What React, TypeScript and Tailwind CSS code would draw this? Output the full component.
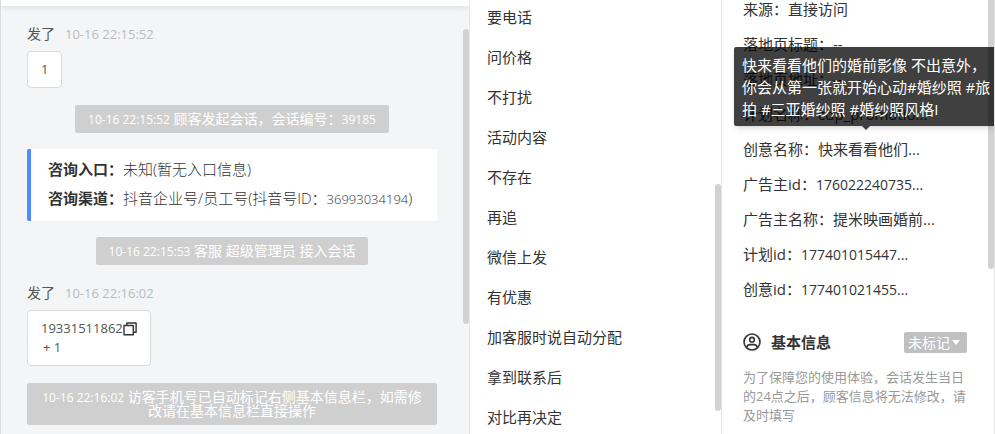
import { ReactNode, useState } from "react";
import clsx from "clsx";

const quickTags = [
  "要电话",
  "问价格",
  "不打扰",
  "活动内容",
  "不存在",
  "再追",
  "微信上发",
  "有优惠",
  "加客服时说自动分配",
  "拿到联系后",
  "对比再决定",
];

const details = [
  { label: "来源", value: "直接访问" },
  { label: "落地页标题", value: "--" },
  { label: "落地页地址", value: "--" },
  { label: "计划名称", value: "cdp_promotio..." },
  {
    label: "创意名称",
    value: "快来看看他们...",
    tooltip: [
      "快来看看他们的婚前影像 不出意外，",
      "你会从第一张就开始心动#婚纱照 #旅",
      "拍 #三亚婚纱照 #婚纱照风格I",
    ],
  },
  { label: "广告主id", value: "176022240735..." },
  { label: "广告主名称", value: "提米映画婚前..." },
  { label: "计划id", value: "177401015447..." },
  { label: "创意id", value: "177401021455..." },
];

const Num = ({ children }: { children: ReactNode }) => (
  <span className="text-xs leading-none">{children}</span>
);

const Scrollbar = ({ className }: { className: string }) => (
  <div className={clsx("absolute w-1.5 bg-[#d2d2d2]", className)} />
);

const Sender = ({ name, time }: { name: string; time: string }) => (
  <div className="mb-[7px] flex h-5 items-center gap-2.5 leading-5">
    <span className="text-[#555]">{name}</span>
    <time className="text-[13px] text-[#bbb]">{time}</time>
  </div>
);

const Bubble = ({ children }: { children: ReactNode }) => (
  <div className="w-fit rounded border border-[#d9dadc] bg-white px-[13px] py-2 text-[13px] leading-[19px] text-[#555]">
    {children}
  </div>
);

const Notice = ({ children }: { children: ReactNode }) => (
  <p className="mx-auto w-fit rounded-xs bg-[#cfcfcf] px-[13px] py-[7px] text-center leading-[14px] text-white">
    {children}
  </p>
);

const CopyIcon = () => (
  <svg
    viewBox="0 0 14 14"
    className="h-3.5 w-3.5"
    fill="none"
    stroke="#333"
    strokeWidth="1.4"
    strokeLinejoin="round"
  >
    <path d="M1 3.5h9.3v9.3H1z" />
    <path d="M3.8 3.5V1h9.3v9.3h-2.8" />
  </svg>
);

const UserIcon = () => (
  <svg
    viewBox="0 0 18 18"
    className="h-[18px] w-[18px]"
    fill="none"
    stroke="#333"
    strokeWidth="1.6"
  >
    <circle cx="9" cy="9" r="8" />
    <circle cx="9" cy="6.7" r="2.3" />
    <path d="M3.7 14.6C4 12.4 5.4 11.6 7 11.6h4c1.6 0 3 .8 3.3 3" />
  </svg>
);

const Chat = () => (
  <section className="relative overflow-hidden border-x border-l-[#d9dadc] border-r-[#e6e7e9] bg-[#f3f5f7] text-sm">
    <header className="h-1.5 bg-white shadow-[0_1px_6px_rgba(0,0,0,0.12)]" />
    <div className="flex flex-col gap-4 pt-4 pr-8 pl-[26px]">
      <div className="pt-0.5 pb-px">
        <Sender name="发了" time="10-16 22:15:52" />
        <Bubble>1</Bubble>
      </div>
      <Notice>
        <Num>10-16 22:15:52</Num> 顾客发起会话，会话编号：<Num>39185</Num>
      </Notice>
      <dl className="rounded-xs border-l-4 border-[#4e8cff] bg-white pt-1.5 pb-2 pl-[17px] text-[15px] leading-[29px] font-light text-[#333]">
        <div className="flex">
          <dt className="font-bold">咨询入口：</dt>
          <dd>未知(暂无入口信息)</dd>
        </div>
        <div className="flex">
          <dt className="font-bold">咨询渠道：</dt>
          <dd>
            抖音企业号/员工号(抖音号ID：
            <span className="text-[13px] leading-none">36993034194</span>)
          </dd>
        </div>
      </dl>
      <Notice>
        <Num>10-16 22:15:53</Num> 客服 超级管理员 接入会话
      </Notice>
      <div className="pt-0.5 pb-px">
        <Sender name="发了" time="10-16 22:16:02" />
        <Bubble>
          <div className="flex items-center">
            19331511862
            <button type="button" aria-label="复制" className="cursor-pointer">
              <CopyIcon />
            </button>
          </div>
          <div className="pl-0.5">+ 1</div>
        </Bubble>
      </div>
      <Notice>
        <Num>10-16 22:16:02</Num>{" "}
        访客手机号已自动标记右侧基本信息栏，如需修改请在基本信息栏直接操作
      </Notice>
    </div>
    <Scrollbar className="top-[29px] right-0 h-[295px] rounded-full" />
  </section>
);

const QuickTags = () => (
  <section className="relative overflow-hidden border-r border-[#e4e4e4]">
    <ul className="-mt-[3px] pl-[17px] text-[15px] text-[#333]">
      {quickTags.map((tag) => (
        <li key={tag} className="flex h-10 items-center">
          {tag}
        </li>
      ))}
    </ul>
    <Scrollbar className="top-[184px] right-0 h-[227px] rounded-full" />
  </section>
);

const Tooltip = ({ lines }: { lines: string[] }) => (
  <div
    role="tooltip"
    className="absolute bottom-full -left-[9px] z-10 mb-1.5 w-[264px] rounded-xs bg-black/75 px-2 pt-[7px] pb-1.5 text-[15px] leading-[22px] whitespace-nowrap text-white shadow-md"
  >
    {lines.map((line) => (
      <div key={line}>{line}</div>
    ))}
    <span className="absolute top-full left-1/2 -translate-x-1 border-x-4 border-t-4 border-x-transparent border-t-black/75" />
  </div>
);

const Visitor = () => {
  const [mark, setMark] = useState("未标记");

  return (
    <section className="relative overflow-hidden border-r border-[#e4e4e4] pr-[27px] pl-[21px]">
      <Scrollbar className="top-0 right-0 h-[269px] rounded-b-full" />
      <dl className="-mt-2 text-[15px] text-[#333]">
        {details.map(({ label, value, tooltip }) => (
          <div key={label} className="relative flex h-[35px] items-center">
            <dt>{label}：</dt>
            <dd className={clsx(/^\d/.test(value) && "text-sm")}>{value}</dd>
            {tooltip ? <Tooltip lines={tooltip} /> : null}
          </div>
        ))}
      </dl>
      <div className="mt-6 flex items-center">
        <UserIcon />
        <h2 className="ml-2.5 text-[15px] font-bold text-[#333]">基本信息</h2>
        <div className="relative ml-auto">
          <select
            aria-label="标记"
            value={mark}
            onChange={(e) => setMark(e.target.value)}
            className="block h-[21px] w-[63px] appearance-none rounded-xs bg-[#c0c0c0] pl-1 text-sm leading-[21px] text-white"
          >
            <option>未标记</option>
            <option>已标记</option>
          </select>
          <span className="pointer-events-none absolute top-2 right-[7px] border-x-4 border-t-5 border-x-transparent border-t-white" />
        </div>
      </div>
      <p className="mt-3.5 text-[13px] leading-[19px] text-[#999]">
        为了保障您的使用体验，会话发生当日的24点之后，顾客信息将无法修改，请及时填写
      </p>
    </section>
  );
};

const App = () => {
  return (
    <main className="grid h-screen grid-cols-[470fr_252fr_273fr] overflow-hidden bg-white font-['Open_Sans','Noto_Sans_CJK_SC',sans-serif]">
      <Chat />
      <QuickTags />
      <Visitor />
    </main>
  );
};

export default App;
